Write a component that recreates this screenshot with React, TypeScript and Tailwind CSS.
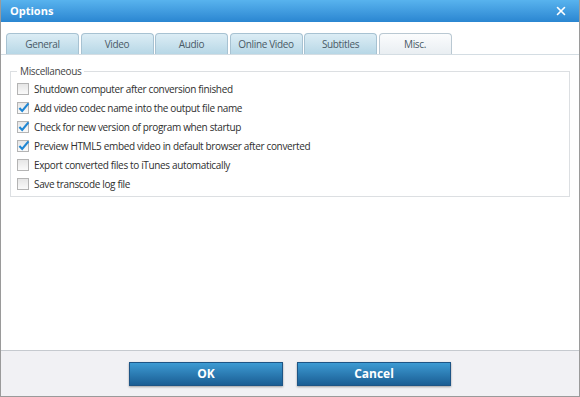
import { X } from 'lucide-react'

const TABS = ['General', 'Video', 'Audio', 'Online Video', 'Subtitles', 'Misc.']

const OPTIONS = [
  { label: 'Shutdown computer after conversion finished', checked: false },
  { label: 'Add video codec name into the output file name', checked: true },
  { label: 'Check for new version of program when startup', checked: true },
  { label: 'Preview HTML5 embed video in default browser after converted', checked: true },
  { label: 'Export converted files to iTunes automatically', checked: false },
  { label: 'Save transcode log file', checked: false },
]

function CheckBox({ checked }: { checked: boolean }) {
  return (
    <span className="relative w-[12px] h-[12px] shrink-0 border border-[#b4b4b4] bg-gradient-to-b from-[#e6e6e6] to-[#fafafa]">
      {checked && (
        <svg viewBox="0 0 12 12" className="absolute -left-[1px] -top-[2px] w-[13px] h-[13px]">
          <path d="M2.2 6.4 L4.8 9.2 L10.6 2.2" fill="none" stroke="#1f86d3" strokeWidth="2" />
        </svg>
      )}
    </span>
  )
}

export default function App() {
  return (
    <div className="w-[580px] h-[397px] flex flex-col bg-white border-x border-b border-[#9a9a9a] font-['Open_Sans',sans-serif] text-[10px] tracking-[-0.35px] text-[#2e2e2e]">
      {/* Title bar */}
      <div className="h-[22px] shrink-0 flex items-center justify-between pl-[9px] pr-[11px] bg-gradient-to-b from-[#58b3ee] to-[#2a86d1]">
        <span className="text-white font-bold text-[11px] tracking-normal">Options</span>
        <X size={14} color="#ffffff" strokeWidth={2.75} />
      </div>

      {/* Tabs */}
      <div className="flex gap-[1.5px] pt-[11px] px-[5px] border-b border-[#d4dde3]">
        {TABS.map(t => {
          const active = t === 'Misc.'
          return (
            <div key={t}
              className={
                active
                  ? 'w-[73px] h-[21px] -mb-px flex items-center justify-center rounded-t-[4px] border border-b-0 border-[#b9c8d2] bg-gradient-to-b from-[#fbfcfd] to-[#e9eef2] text-[#4a5a66]'
                  : 'w-[73px] h-[21px] flex items-center justify-center rounded-t-[4px] border border-b-0 border-[#a7c2d2] bg-gradient-to-b from-[#dcedf5] to-[#b7d7e6] text-[#4a5a66]'
              }>
              {t}
            </div>
          )
        })}
      </div>

      {/* Content */}
      <div className="flex-1 px-[9px] pt-[9px]">
        <fieldset className="border border-[#dcdfe2] pl-[6px] pr-2 pt-[1px] pb-[3px]">
          <legend className="px-[3px] leading-[14px] text-[#444]">Miscellaneous</legend>
          {OPTIONS.map(o => (
            <div key={o.label} className="h-[19px] flex items-center gap-[5px]">
              <CheckBox checked={o.checked} />
              <span className="leading-[14px]">{o.label}</span>
            </div>
          ))}
        </fieldset>
      </div>

      {/* Footer */}
      <div className="h-[46px] shrink-0 flex items-center justify-center gap-[14px] border-t border-[#c6cacf] bg-[#f1f1f4]">
        {['OK', 'Cancel'].map(b => (
          <button key={b}
            className="w-[154px] h-[24px] flex items-center justify-center border border-[#1e5585] bg-gradient-to-b from-[#3d9bd3] to-[#1b5e94] text-white font-bold text-[12px] tracking-normal shadow-[0_1px_2px_rgba(0,0,0,0.35)]">
            {b}
          </button>
        ))}
      </div>
    </div>
  )
}
